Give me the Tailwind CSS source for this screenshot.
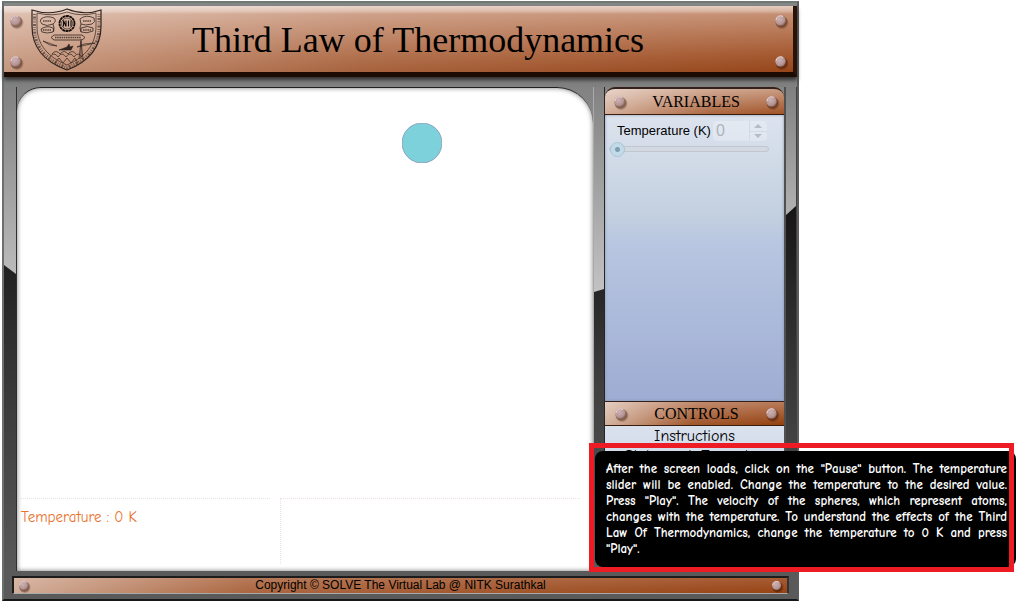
<!DOCTYPE html>
<html lang="en">
<head>
<meta charset="utf-8">
<title>Third Law of Thermodynamics</title>
<script src="https://cdn.jsdelivr.net/npm/@tailwindcss/browser@4"></script>
</head>
<body class="relative bg-white font-['Liberation_Sans',Arial,sans-serif] text-black">
<svg class="absolute size-0" aria-hidden="true">
  <defs>
    <radialGradient id="rg" cx="40%" cy="35%" r="70%"><stop offset="0" stop-color="#cdb2b2"/><stop offset=".7" stop-color="#b59494"/><stop offset="1" stop-color="#86645e"/></radialGradient>
    <symbol id="rivet" viewBox="0 0 16 16"><circle cx="9" cy="9.500" r="6.500" fill="#301000" opacity=".2"/><circle cx="8.500" cy="9" r="5.800" fill="#301000" opacity=".35"/><circle cx="7.500" cy="7.500" r="5.200" fill="url(#rg)"/><path d="M3 7a4.600 4.600 0 0 1 7-3.500" stroke="#e8d4d4" fill="none"/></symbol>
  </defs>
</svg>
<div class="mt-px mr-[217px] ml-[2px] flex min-h-[600px] flex-col border-2 border-t-[#707873] border-r-[#5c5c5c] border-b-[#161818] border-l-[#6b706e] bg-[linear-gradient(#858886_0,#808080_90px,#bdbdbd_290px,#404040_300px,#5c5c5c_560px)]">
  <header class="relative mt-[3px] flex h-[71px] items-center border-r-4 border-b-5 border-r-[#2a1206] border-b-[#1c0b03] bg-[linear-gradient(#ffffff80_0,#ffffff50_5px,transparent_8px),linear-gradient(90deg,#ffffff70,#ffffff28_45%,transparent),linear-gradient(#cc9a80,#a4582f_75%,#964519)] pl-1 shadow-[0_3px_4px_#303030]">
    <div class="flex h-full w-4 flex-col justify-between pt-[7px]"><svg class="size-4"><use href="#rivet"/></svg><svg class="mb-[2px] size-4"><use href="#rivet"/></svg></div>
    <svg class="mt-[2px] ml-[6px] h-[64px] w-[73px]" viewBox="0 0 73 64" fill="none" stroke="#302420" role="img" aria-label="NITK crest">
      <path d="M2 2q18 6 35-1q17 7 34 1v16c0 23-13 36-34 44C15 54 2 41 2 18z" stroke-width="1.200"/>
      <path d="M7 5q16 4 30-1q14 5 29 1v13c0 19-11 31-29 39C18 49 7 37 7 18z" stroke-width=".7"/>
      <path d="M4.500 6v13c0 20 11 33 32.500 40.500C58 52 69 39 69 19V6" stroke-width="3" stroke-dasharray="1 1.400 2 1.200 .7 1.300" opacity=".6"/>
      <circle cx="37" cy="15.500" r="7.500" stroke="#100c0a" stroke-width="1.800" stroke-dasharray="3 .4"/><circle cx="37" cy="15.500" r="5.500" stroke-width=".7"/>
      <path d="M33.500 18.500v-6l2.500 6v-6m2.500 0v6m2.500-6v6" stroke="#100c0a" stroke-width="1.100"/>
      <path d="M11 11q5-4 13-1q3 3-1 6q-6 3-11 0q-3-3-1-5zM11 21q6-4 12-1q2 2 0 4q-6 2-11 0zM50 11q6-5 14-1q2 4-2 6q-7 2-11 0zM51 20q7-3 12 0v3q-6 3-12 1zM24 27h28l3 2.500-3 2.500H24l-3-2.500zM23 16q2 4 0 8m28-8q-2 4 0 8" stroke-width=".8"/>
      <path d="M13 13h8M13 22h8M53 13h8M53 22h8M25 29.500h26" stroke-width="1.500" stroke-dasharray="1.500 .7" opacity=".8"/>
      <path d="M13 33l14 5-7-1zM47 39l18-4-11 1zM51 31v20m-2 0l2-18 2 18" stroke-width=".7"/>
      <path d="M29 42l8-3 2-3 1 3 3-1-2 4z" fill="#302420" stroke-width=".6"/>
      <path d="M20 49q4-6 8 0q4-6 8 0q4-6 8 0q4-6 8 0M22 46q4-5 8 0q4-5 8 0q4-5 8 0M25 55l4-5 4 5 4-5 4 5 4-5 3 5" stroke-width=".7"/>
    </svg>
    <h1 class="flex-1 pt-[2px] pr-[60px] pl-[20px] text-center font-['Liberation_Serif','Times_New_Roman',serif] text-[36px] leading-10">Third Law of Thermodynamics</h1>
    <div class="mr-1 flex h-full w-4 flex-col justify-between pt-[7px]"><svg class="size-4"><use href="#rivet"/></svg><svg class="mb-[2px] size-4"><use href="#rivet"/></svg></div>
  </header>

  <main class="flex h-[494px] pt-[10px]">
    <div class="flex w-[13px] flex-col justify-end border-r border-[#303030] bg-[linear-gradient(#808080,#bdbdbd_40%)]">
      <div class="h-[306px] bg-[linear-gradient(#202020,#303030_25%,#5a5a5a)] [clip-path:polygon(0_0,100%_9px,100%_100%,0_100%)]"></div>
    </div>
    <div class="flex flex-1 bg-[linear-gradient(#828282_0,#8a8a8a_40px,white_41px)]">
    <section class="flex flex-1 flex-col rounded-tl-[24px] rounded-tr-[36px] border-t border-[#202020] bg-white shadow-[inset_0_0_5px_#777]" aria-label="Simulation">
      <div class="h-[410px] pt-[35px] pl-[67%]"><svg class="-ml-px size-10" role="img" aria-label="Atom"><circle cx="20" cy="20" r="20" fill="#7cd1db" stroke="#8a8ab0" stroke-width=".7"/></svg></div>
      <div class="flex gap-[10px] pr-[13px] pl-[3px]">
        <p class="h-[66px] w-[250px] border-t border-dotted border-[#e4e4e4] pt-[8px] pl-px font-['Comic_Sans_MS','Comic_Neue','Open_Sans',sans-serif] text-[15px] leading-5 font-medium text-[#e9702a]">Temperature : 0 K</p>
        <div class="h-[66px] flex-1 border-t border-l border-dotted border-[#eee0e0]"></div>
      </div>
    </section>
    </div>
    <div class="flex w-[12px] flex-col justify-end border-r border-l border-r-[#252525] border-l-[#aaaaaa] bg-[linear-gradient(#828282,#c5c5c5_44%)]">
      <div class="h-[282px] bg-[linear-gradient(#262626,#404040_35%,#5a5a5a)] [clip-path:polygon(0_3px,100%_0,100%_100%,0_100%)]"></div>
    </div>
    <aside class="flex w-[179px] flex-col bg-[#858585]">
      <h2 class="flex h-[28px] items-center justify-between rounded-t-[10px] border-t-2 border-b border-t-[#33221b] border-b-[#3a1d0c] bg-[linear-gradient(110deg,#ffffff90,#ffffff20_60%,transparent),linear-gradient(#c99b82,#a15327)] pr-[4px] pl-[7px] font-['Liberation_Serif','Times_New_Roman',serif] text-[16px] leading-5"><svg class="size-4"><use href="#rivet"/></svg>VARIABLES<svg class="size-4"><use href="#rivet"/></svg></h2>
      <div class="flex-1 bg-[linear-gradient(#dce3ee,#c3d0e0_35%,#b8c6e1_45%,#9facd3)] pt-[6px] pl-[12px] shadow-[inset_0_0_3px_#8794a8]">
        <div class="flex items-center">
          <label for="temp" class="text-[13px] leading-5 whitespace-nowrap">Temperature (K)</label>
          <div class="ml-[2px] flex h-5 w-[54px] rounded-sm bg-white/25">
            <input id="temp" value="0" disabled class="w-[36px] pl-[3px] font-['Liberation_Sans',Arial,sans-serif] text-[16px] leading-5 text-[#aeb3ba]">
            <div class="flex flex-1 flex-col border-l border-[#d4dae4]">
              <button disabled aria-label="Increase" class="flex flex-1 items-center justify-center border-b border-[#d4dae4]"><svg class="h-1 w-2" viewBox="0 0 8 4" fill="#b5bcc6"><path d="M0 4L4 0l4 4z"/></svg></button>
              <button disabled aria-label="Decrease" class="flex flex-1 items-center justify-center"><svg class="h-1 w-2" viewBox="0 0 8 4" fill="#b5bcc6"><path d="M0 0l4 4 4-4z"/></svg></button>
            </div>
          </div>
        </div>
        <input type="range" min="0" max="100" value="0" disabled aria-label="Temperature slider" class="-ml-2 block h-4 w-[160px] appearance-none bg-transparent [&::-webkit-slider-runnable-track]:h-[6px] [&::-webkit-slider-runnable-track]:rounded-sm [&::-webkit-slider-runnable-track]:border [&::-webkit-slider-runnable-track]:border-[#c2c6cd] [&::-webkit-slider-runnable-track]:bg-[#d3d9e2] [&::-webkit-slider-thumb]:-mt-[5px] [&::-webkit-slider-thumb]:size-[15px] [&::-webkit-slider-thumb]:appearance-none [&::-webkit-slider-thumb]:rounded-full [&::-webkit-slider-thumb]:border [&::-webkit-slider-thumb]:border-[#a9c4d6] [&::-webkit-slider-thumb]:bg-[radial-gradient(circle,#7d9db0_0_2px,#c3dbe9_3px)]">
      </div>
      <h2 class="flex h-[25px] items-center justify-between border-y border-t-[#33221b] border-b-[#3a1d0c] bg-[linear-gradient(105deg,#ffffffa0,#ffffff20_50%,transparent),linear-gradient(#b87a58,#93400f)] pr-[4px] pl-[8px] font-['Liberation_Serif','Times_New_Roman',serif] text-[16px] leading-5"><svg class="size-4"><use href="#rivet"/></svg>CONTROLS<svg class="size-4"><use href="#rivet"/></svg></h2>
      <nav class="flex h-[145px] flex-col bg-[linear-gradient(#d9e1ed,#bdc9e0)] text-center font-['Comic_Sans_MS','Comic_Neue','Open_Sans',sans-serif] text-[16px] leading-5">
        <a href="#instructions">Instructions</a>
        <a href="#formula">Statement, Formulae</a>
      </nav>
    </aside>
    <div class="flex flex-none w-[13px] flex-col justify-end border-r border-l-2 border-r-[#404040] border-l-[#505050] bg-[linear-gradient(#808080,#b5b5b5_28%)]">
      <div class="h-[365px] bg-[linear-gradient(#171515,#303030_35%,#5a5a5a)] [clip-path:polygon(0_9px,100%_0,100%_100%,0_100%)]"></div>
    </div>
  </main>

  <div class="flex-1 bg-[#5a5a5a] px-[8px] pt-[5px]">
    <footer class="flex h-[18px] items-center justify-between border-t-2 border-r-2 border-b border-l-2 border-t-[#1c1c1c] border-r-[#333] border-b-[#aaa] border-l-[#1c1c1c] bg-[linear-gradient(90deg,#ffffff90,#ffffff30_30%,transparent),linear-gradient(#a65b33,#974314)] px-[2px]">
      <svg class="h-[14px] w-4"><use href="#rivet"/></svg>
      <p class="pb-[2px] text-[12px] leading-4">Copyright © SOLVE The Virtual Lab @ NITK Surathkal</p>
      <svg class="h-[14px] w-4"><use href="#rivet"/></svg>
    </footer>
  </div>
</div>

<div role="tooltip" class="absolute top-[451px] right-0 w-[421px] rounded-lg bg-black pt-[10px] pr-[9px] pb-[10px] pl-[11px] font-['Comic_Sans_MS','Comic_Neue','Open_Sans',sans-serif] text-[13px] leading-4 font-semibold text-white">
  <div class="[&>span]:block [&>span]:whitespace-nowrap [&>span]:[text-align-last:justify]">
    <span>After the screen loads, click on the "Pause" button. The temperature</span>
    <span>slider will be enabled. Change the temperature to the desired value.</span>
    <span>Press "Play". The velocity of the spheres, which represent atoms,</span>
    <span>changes with the temperature. To understand the effects of the Third</span>
    <span>Law Of Thermodynamics, change the temperature to 0 K and press</span>
  </div>
  <span class="block">"Play".</span>
</div>
<div class="pointer-events-none absolute top-[443px] right-[2px] h-[129px] w-[425px] border-5 border-[#ed1c24]"></div>
</body>
</html>
